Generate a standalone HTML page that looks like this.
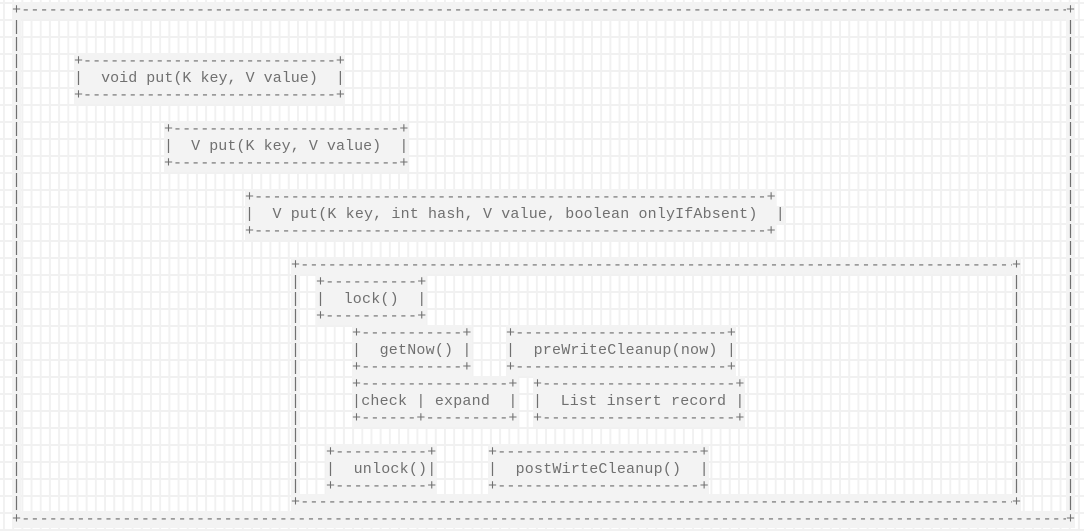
<!DOCTYPE html>
<html><head><meta charset="utf-8"><style>
html,body{margin:0;padding:0}
body{width:1084px;height:531px;overflow:hidden;position:relative;background-color:#fff;
background-image:linear-gradient(90deg,#f1f1f1 2px,transparent 2px),linear-gradient(#f1f1f1 2px,transparent 2px);
background-size:9.2px 17px,9.2px 17px;background-position:3px 0,0 2px;}
pre{position:absolute;margin:0;font-family:"Liberation Mono",monospace;font-size:15px;letter-spacing:0.2px;line-height:17px;color:#707070;}
pre span{background:#f3f3f3}
.clip{overflow:hidden;background:#f3f3f3}
</style></head><body>
<pre class="clip" style="left:12px;top:2px;width:1060px"><span>+----------------------------------------------------------------------------------------------------------------------------------</span></pre>
<pre style="left:1066px;top:2px"><span>+</span></pre>
<pre class="clip" style="left:12px;top:511px;width:1060px"><span>+----------------------------------------------------------------------------------------------------------------------------------</span></pre>
<pre style="left:1066px;top:511px"><span>+</span></pre>
<pre style="left:12px;top:19px"><span>|</span>
<span>|</span>
<span>|</span>
<span>|</span>
<span>|</span>
<span>|</span>
<span>|</span>
<span>|</span>
<span>|</span>
<span>|</span>
<span>|</span>
<span>|</span>
<span>|</span>
<span>|</span>
<span>|</span>
<span>|</span>
<span>|</span>
<span>|</span>
<span>|</span>
<span>|</span>
<span>|</span>
<span>|</span>
<span>|</span>
<span>|</span>
<span>|</span>
<span>|</span>
<span>|</span>
<span>|</span>
<span>|</span></pre>
<pre style="left:1066px;top:19px"><span>|</span>
<span>|</span>
<span>|</span>
<span>|</span>
<span>|</span>
<span>|</span>
<span>|</span>
<span>|</span>
<span>|</span>
<span>|</span>
<span>|</span>
<span>|</span>
<span>|</span>
<span>|</span>
<span>|</span>
<span>|</span>
<span>|</span>
<span>|</span>
<span>|</span>
<span>|</span>
<span>|</span>
<span>|</span>
<span>|</span>
<span>|</span>
<span>|</span>
<span>|</span>
<span>|</span>
<span>|</span>
<span>|</span></pre>

<pre style="left:74px;top:53px;letter-spacing:0.03px"><span>+----------------------------+</span>
<span>|  void put(K key, V value)  |</span>
<span>+----------------------------+</span></pre>

<pre style="left:164px;top:121px;letter-spacing:0.05px"><span>+-------------------------+</span>
<span>|  V put(K key, V value)  |</span>
<span>+-------------------------+</span></pre>

<pre style="left:245px;top:189px;letter-spacing:0.15px"><span>+--------------------------------------------------------+</span>
<span>|  V put(K key, int hash, V value, boolean onlyIfAbsent)  |</span>
<span>+--------------------------------------------------------+</span></pre>

<pre class="clip" style="left:291px;top:257px;width:722px"><span>+---------------------------------------------------------------------------------------------</span></pre>
<pre style="left:1012px;top:257px"><span>+</span></pre>
<pre class="clip" style="left:291px;top:494px;width:722px"><span>+---------------------------------------------------------------------------------------------</span></pre>
<pre style="left:1012px;top:494px"><span>+</span></pre>
<pre style="left:291px;top:274px"><span>|</span>
<span>|</span>
<span>|</span>
<span>|</span>
<span>|</span>
<span>|</span>
<span>|</span>
<span>|</span>
<span>|</span>
<span>|</span>
<span>|</span>
<span>|</span>
<span>|</span></pre>
<pre style="left:1012px;top:274px"><span>|</span>
<span>|</span>
<span>|</span>
<span>|</span>
<span>|</span>
<span>|</span>
<span>|</span>
<span>|</span>
<span>|</span>
<span>|</span>
<span>|</span>
<span>|</span>
<span>|</span></pre>

<pre style="left:316px;top:274px"><span>+----------+</span>
<span>|  lock()  |</span>
<span>+----------+</span></pre>

<pre style="left:352px;top:325px"><span>+-----------+</span>
<span>|  getNow() |</span>
<span>+-----------+</span></pre>

<pre style="left:506px;top:325px"><span>+-----------------------+</span>
<span>|  preWriteCleanup(now) |</span>
<span>+-----------------------+</span></pre>

<pre style="left:352px;top:376px"><span>+----------------+</span>
<span>|check | expand  |</span>
<span>+------+---------+</span></pre>

<pre style="left:533px;top:376px"><span>+---------------------+</span>
<span>|  List insert record |</span>
<span>+---------------------+</span></pre>

<pre style="left:326px;top:444px"><span>+----------+</span>
<span>|  unlock()|</span>
<span>+----------+</span></pre>

<pre style="left:488px;top:444px"><span>+----------------------+</span>
<span>|  postWirteCleanup()  |</span>
<span>+----------------------+</span></pre>
</body></html>
